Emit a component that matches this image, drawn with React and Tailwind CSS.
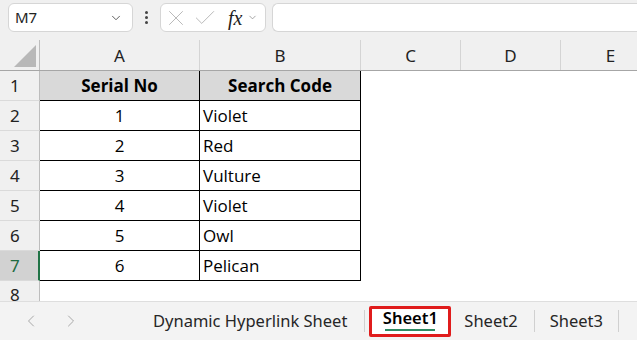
import { ChevronDown, ChevronLeft, ChevronRight, X, Check } from "lucide-react";

const rows = [
  ["1", "Violet"],
  ["2", "Red"],
  ["3", "Vulture"],
  ["4", "Violet"],
  ["5", "Owl"],
  ["6", "Pelican"],
];

const ui = { fontFamily: '"Noto Sans", "Open Sans", sans-serif' };
const cell = { fontFamily: '"Open Sans", "Liberation Sans", sans-serif' };

export default function App() {
  return (
    <div className="w-[637px] h-[340px] overflow-hidden bg-white flex flex-col" style={ui}>
      {/* Formula bar */}
      <div className="h-[40px] shrink-0 bg-[#f0f0f0] flex items-start pt-[3px] pl-[8px]">
        <div className="w-[125px] h-[29px] bg-white border border-[#d6d6d6] rounded-[6px] flex items-center justify-between pl-[6px] pr-[9px]">
          <span className="text-[15px] text-[#222]">M7</span>
          <ChevronDown className="w-[14px] h-[14px] text-[#555]" strokeWidth={1.6} />
        </div>
        <div className="w-[27px] h-[29px] flex flex-col items-center justify-center gap-[2px]">
          <span className="w-[3px] h-[3px] bg-[#444] rounded-full" />
          <span className="w-[3px] h-[3px] bg-[#444] rounded-full" />
          <span className="w-[3px] h-[3px] bg-[#444] rounded-full" />
        </div>
        <div className="w-[106px] h-[29px] bg-white border border-[#d6d6d6] rounded-[6px] flex items-center pl-[2px]">
          <X className="w-[26px] h-[26px] text-[#b8b8b8]" strokeWidth={0.9} />
          <Check className="w-[26px] h-[26px] text-[#b8b8b8] ml-[3px]" strokeWidth={0.9} />
          <span className="ml-[10px] text-[20px] italic text-[#222] leading-none" style={{ fontFamily: '"Liberation Serif", serif' }}>fx</span>
          <ChevronDown className="w-[11px] h-[11px] text-[#888] ml-[5px]" strokeWidth={1.6} />
        </div>
        <div className="ml-[6px] flex-1 h-[29px] bg-white border border-[#d6d6d6] rounded-l-[6px] border-r-0" />
      </div>

      {/* Grid */}
      <div className="flex-1 flex flex-col overflow-hidden">
        {/* Column headers */}
        <div className="h-[31px] shrink-0 flex bg-[#f0f0f0] border-b border-[#a6a6a6]">
          <div className="w-[40px] shrink-0 border-r border-[#bdbdbd] relative">
            <div className="absolute right-[3px] bottom-[3px] w-0 h-0 border-l-[22px] border-l-transparent border-b-[22px] border-b-[#b8b8b8]" />
          </div>
          {[
            ["A", "w-[160px]"],
            ["B", "w-[161px]"],
            ["C", "w-[100px]"],
            ["D", "w-[100px]"],
            ["E", "w-[100px]"],
          ].map(([l, w]) => (
            <div key={l} className={`${w} shrink-0 flex items-center justify-center text-[17px] text-[#222] border-r border-[#d4d4d4] pt-[2px]`}>
              {l}
            </div>
          ))}
        </div>

        {/* Header row */}
        <div className="h-[30px] shrink-0 flex">
          <div className="w-[40px] shrink-0 bg-[#f0f0f0] border-r border-[#bdbdbd] border-b border-b-[#dadada] flex items-center pl-[10px] text-[17px] text-[#222]">1</div>
          <div className="w-[160px] shrink-0 bg-[#d9d9d9] border-r border-black border-b flex items-center justify-center text-[17px] font-bold text-black" style={cell}>Serial No</div>
          <div className="w-[161px] shrink-0 bg-[#d9d9d9] border-r border-black border-b flex items-center justify-center text-[17px] font-bold text-black" style={cell}>Search Code</div>
          <div className="flex-1" />
        </div>

        {rows.map(([n, v], i) => {
          const active = i === rows.length - 1;
          return (
            <div key={i} className="h-[30px] shrink-0 flex">
              <div
                className={
                  active
                    ? "w-[40px] shrink-0 bg-[#d2d2d2] border-r-2 border-r-[#217346] border-b border-b-[#dadada] flex items-center pl-[10px] text-[17px] text-[#1e6b40]"
                    : "w-[40px] shrink-0 bg-[#f0f0f0] border-r border-[#bdbdbd] border-b border-b-[#dadada] flex items-center pl-[10px] text-[17px] text-[#222]"
                }
              >
                {i + 2}
              </div>
              <div className="w-[160px] shrink-0 border-r border-black border-b flex items-center justify-center text-[17px] text-black" style={cell}>{n}</div>
              <div className="w-[161px] shrink-0 border-r border-black border-b flex items-center pl-[3px] text-[17px] text-black" style={cell}>{v}</div>
              <div className="flex-1" />
            </div>
          );
        })}

        <div className="h-[30px] shrink-0 flex">
          <div className="w-[40px] shrink-0 bg-[#f0f0f0] border-r border-[#bdbdbd] flex items-start pt-[1px] pl-[10px] text-[17px] text-[#222]">8</div>
          <div className="flex-1" />
        </div>
      </div>

      {/* Sheet tabs */}
      <div className="h-[39px] shrink-0 bg-[#f3f3f3] border-t border-[#dedede] flex items-center">
        <ChevronLeft className="ml-[21px] w-[20px] h-[20px] text-[#a8a8a8]" strokeWidth={1.2} />
        <ChevronRight className="ml-[20px] w-[20px] h-[20px] text-[#a8a8a8]" strokeWidth={1.2} />
        <span className="ml-[72px] text-[16.5px] text-[#262626]">Dynamic Hyperlink Sheet</span>
        <span className="ml-[17px] w-px h-[22px] bg-[#d0d0d0]" />
        <div className="ml-[4px] h-[31px] w-[82px] border-[3px] border-[#e01c1c] rounded-[2px] bg-white flex flex-col items-center justify-center">
          <span className="text-[16.5px] font-semibold text-black leading-[20px] -mt-[3px]">Sheet1</span>
          <span className="w-[50px] h-[1.5px] bg-[#2e8b63] mt-[1px]" />
        </div>
        <span className="ml-[13px] text-[16.5px] text-[#262626]">Sheet2</span>
        <span className="ml-[16px] w-px h-[22px] bg-[#d0d0d0]" />
        <span className="ml-[15px] text-[16.5px] text-[#262626]">Sheet3</span>
        <span className="ml-[15px] w-px h-[22px] bg-[#d0d0d0]" />
      </div>
    </div>
  );
}
